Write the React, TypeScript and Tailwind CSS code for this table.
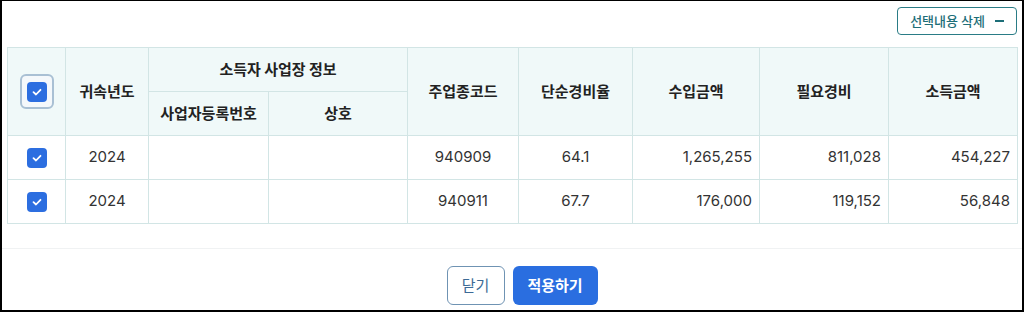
import React from 'react';

const font = { fontFamily: '"Noto Sans CJK KR", "Noto Sans", sans-serif' };

const rows = [
  { year: '2024', code: '940909', rate: '64.1', income: '1,265,255', expense: '811,028', amount: '454,227' },
  { year: '2024', code: '940911', rate: '67.7', income: '176,000', expense: '119,152', amount: '56,848' },
];

const Check: React.FC = () => (
  <span className="inline-flex w-[20px] h-[20px] rounded-[4px] bg-[#2c6ee0] items-center justify-center">
    <svg width="12" height="12" viewBox="0 0 12 12" fill="none">
      <path d="M2.5 6.2 L5 8.5 L9.5 3.8" stroke="white" strokeWidth="1.8" strokeLinecap="round" strokeLinejoin="round" />
    </svg>
  </span>
);

const th = 'border border-[#d2e5e5] bg-[#f0f9f9] text-[15px] font-semibold text-[#222] text-center align-middle';
const td = 'border border-[#d2e5e5] text-[15px] text-[#333] align-middle h-[44px] font-[Inter,"Noto_Sans_CJK_KR",sans-serif]';

const App: React.FC = () => {
  return (
    <div
      className="w-[1024px] h-[312px] bg-white border-t border-l-2 border-r-2 border-b-2 border-black flex flex-col"
      style={font}
    >
      <div className="flex justify-end pt-[6px] pr-[5px]">
        <button className="h-[28px] w-[120px] border border-[#2a7c86] rounded-[4px] text-[#1d6e78] text-[13px] font-medium flex items-center justify-center gap-[10px] bg-white">
          <span>선택내용 삭제</span>
          <span className="w-[9px] h-[2px] bg-[#1d6e78]" />
        </button>
      </div>

      <div className="pl-[5px] pt-[12px]">
        <table className="border-collapse table-fixed w-[1010px]">
          <colgroup>
            <col className="w-[58px]" />
            <col className="w-[83px]" />
            <col className="w-[120px]" />
            <col className="w-[139px]" />
            <col className="w-[111px]" />
            <col className="w-[114px]" />
            <col className="w-[127px]" />
            <col className="w-[129px]" />
            <col className="w-[129px]" />
          </colgroup>
          <thead>
            <tr className="h-[44px]">
              <th rowSpan={2} className={th}>
                <span className="inline-flex w-[34px] h-[35px] rounded-[6px] border-2 border-[#a9c0d4] bg-[#f4f8fb] items-center justify-center">
                  <Check />
                </span>
              </th>
              <th rowSpan={2} className={th}>귀속년도</th>
              <th colSpan={2} className={th}>소득자 사업장 정보</th>
              <th rowSpan={2} className={th}>주업종코드</th>
              <th rowSpan={2} className={th}>단순경비율</th>
              <th rowSpan={2} className={th}>수입금액</th>
              <th rowSpan={2} className={th}>필요경비</th>
              <th rowSpan={2} className={th}>소득금액</th>
            </tr>
            <tr className="h-[44px]">
              <th className={th}>사업자등록번호</th>
              <th className={th}>상호</th>
            </tr>
          </thead>
          <tbody>
            {rows.map((r, i) => (
              <tr key={i}>
                <td className={`${td} text-center`}>
                  <span className="inline-flex align-middle">
                    <Check />
                  </span>
                </td>
                <td className={`${td} text-center`}>{r.year}</td>
                <td className={td}></td>
                <td className={td}></td>
                <td className={`${td} text-center`}>{r.code}</td>
                <td className={`${td} text-center`}>{r.rate}</td>
                <td className={`${td} text-right pr-[7px]`}>{r.income}</td>
                <td className={`${td} text-right pr-[7px]`}>{r.expense}</td>
                <td className={`${td} text-right pr-[7px]`}>{r.amount}</td>
              </tr>
            ))}
          </tbody>
        </table>
      </div>

      <div className="mt-[24px] border-t border-[#f0f2f3]" />

      <div className="flex justify-center gap-[8px] pt-[17px] pl-[20px]">
        <button className="w-[58px] h-[39px] border border-[#6f93b3] rounded-[6px] text-[#3c6a96] text-[15px] bg-white">
          닫기
        </button>
        <button className="w-[85px] h-[39px] rounded-[6px] bg-[#2a6ee0] text-white text-[15px] font-semibold">
          적용하기
        </button>
      </div>
    </div>
  );
};

export default App;
